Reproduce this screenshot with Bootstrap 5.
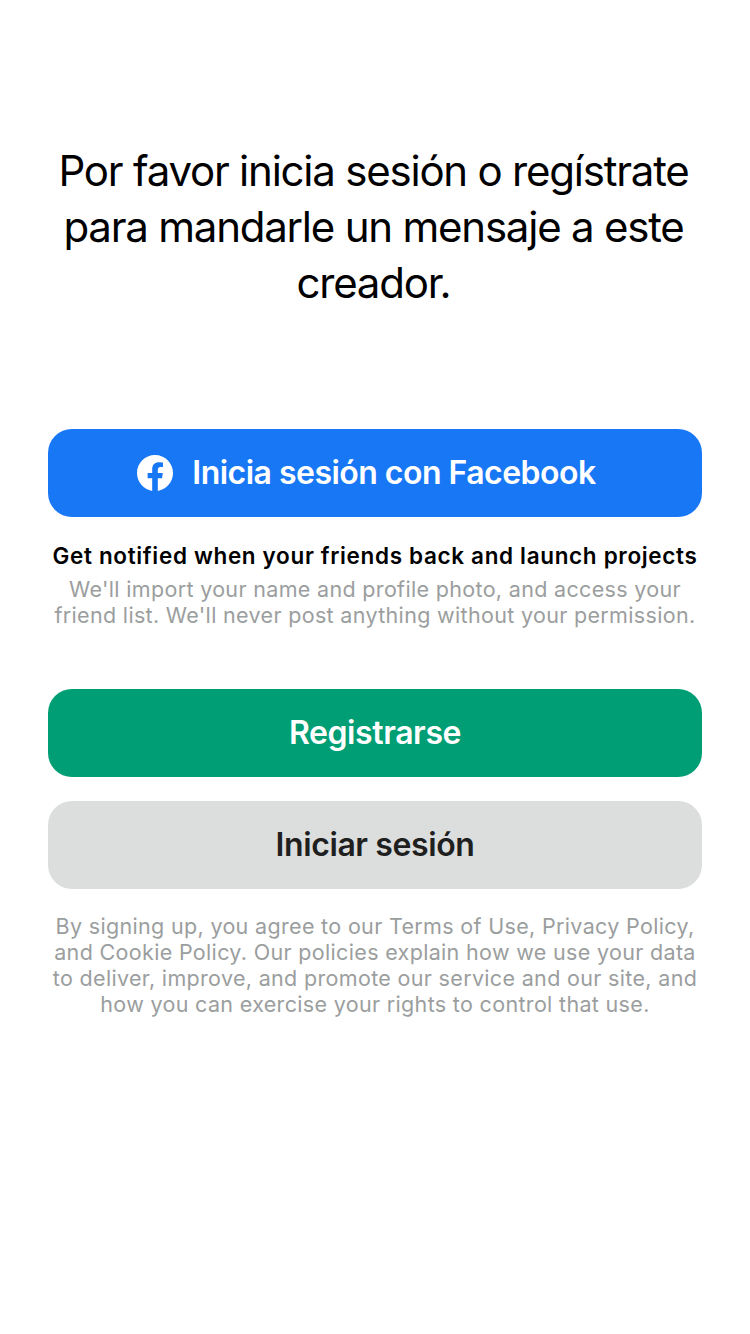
<!DOCTYPE html>
<html lang="es">
<head>
<meta charset="utf-8">
<meta name="viewport" content="width=device-width, initial-scale=1">
<title>Iniciar sesión</title>
<link href="https://cdn.jsdelivr.net/npm/bootstrap@5.3.0/dist/css/bootstrap.min.css" rel="stylesheet">
<style>
body{font-family:Inter,"Liberation Sans",sans-serif;background:#fff;color:#000}
.screen{padding:143px 48px 0}
.headline{font-size:42px;line-height:56px;font-weight:400;letter-spacing:-1.22px;margin-bottom:118px;padding-right:3px}
.action{--bs-btn-font-size:32px;--bs-btn-font-weight:600;--bs-btn-border-radius:24px;--bs-btn-border-width:0;height:88px;line-height:40px;letter-spacing:-.4px}
.action-facebook{--bs-btn-bg:#1877f5;--bs-btn-color:#fff;--bs-btn-hover-bg:#1268dc;--bs-btn-hover-color:#fff;padding-right:29px;letter-spacing:-.52px}
.brand-icon{margin-right:19px}
.action-register{--bs-btn-bg:#009e74;--bs-btn-color:#fff;--bs-btn-hover-bg:#028760;--bs-btn-hover-color:#fff;margin-top:61px}
.action-login{--bs-btn-bg:#dcdedd;--bs-btn-color:#1f1f1f;--bs-btn-hover-bg:#cfd1d0;margin-top:24px}
.notice-title{font-size:22.5px;line-height:26px;font-weight:600;letter-spacing:.66px;margin-top:26px;margin-bottom:7px}
.fine-print{font-size:21.5px;line-height:26px;color:#9b9e9e;letter-spacing:.33px}
</style>
</head>
<body>
<main class="screen text-center text-nowrap">
<h1 class="headline">Por favor inicia sesión o regístrate<br>para mandarle un mensaje a este<br>creador.</h1>
<button class="btn action action-facebook w-100 d-flex align-items-center justify-content-center" type="button">
<svg class="brand-icon flex-shrink-0" width="36" height="36" viewBox="0 0 24 24" fill="currentColor" aria-hidden="true"><path d="M24 12.073c0-6.627-5.373-12-12-12s-12 5.373-12 12c0 5.99 4.388 10.954 10.125 11.854v-8.385H7.078v-3.47h3.047V9.43c0-3.007 1.792-4.669 4.533-4.669 1.312 0 2.686.235 2.686.235v2.953H15.83c-1.491 0-1.956.925-1.956 1.874v2.25h3.328l-.532 3.47h-2.796v8.385C19.612 23.027 24 18.062 24 12.073z"/></svg>
<span>Inicia sesión con Facebook</span></button>
<p class="notice-title"><span>Get notified when your friends back and launch projects</span></p>
<p class="fine-print mb-0"><span>We'll import your name and profile photo, and access your</span><br><span>friend list. We'll never post anything without your permission.</span></p>
<button class="btn action action-register d-block w-100" type="button"><span>Registrarse</span></button>
<button class="btn action action-login d-block w-100" type="button"><span>Iniciar sesión</span></button>
<p class="fine-print mt-4 mb-0"><span>By signing up, you agree to our Terms of Use, Privacy Policy,</span><br><span>and Cookie Policy. Our policies explain how we use your data</span><br><span>to deliver, improve, and promote our service and our site, and</span><br><span>how you can exercise your rights to control that use.</span></p>
</main>
<script src="https://cdn.jsdelivr.net/npm/bootstrap@5.3.0/dist/js/bootstrap.bundle.min.js"></script>
</body>
</html>
